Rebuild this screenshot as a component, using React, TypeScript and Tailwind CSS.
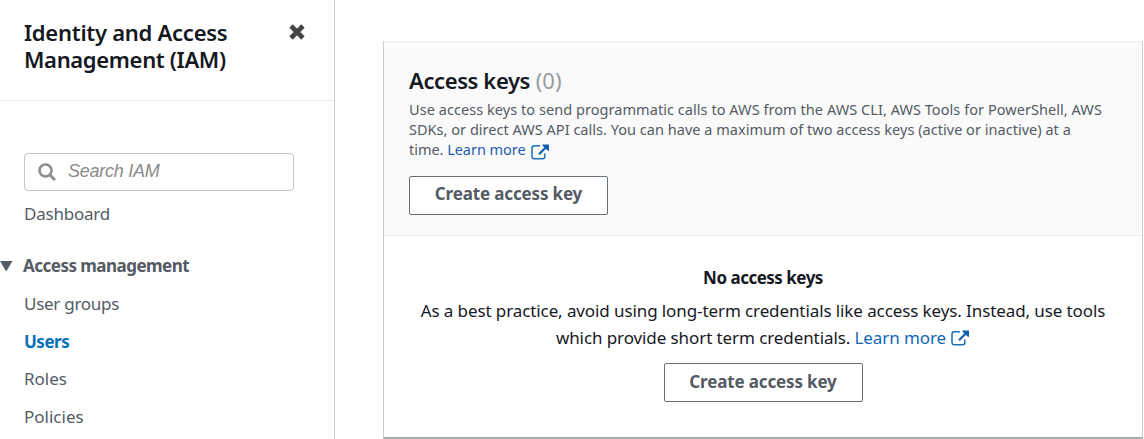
import React from "react";

function ExternalIcon({ className }: { className: string }) {
  return (
    <svg viewBox="0 0 19 16" className={className} fill="none">
      <path d="M9 1.7H3.5a2.5 2.5 0 0 0-2.5 2.5V12.5a2.3 2.3 0 0 0 2.3 2.3h8.2a2.3 2.3 0 0 0 2.3-2.3V9.5" stroke="#1a6fb8" strokeWidth="1.5" />
      <path d="M8 10.2 15.5 2.7" stroke="#0f5fae" strokeWidth="2.2" />
      <path d="M11.5.4H18v6.4h-1.2L11.5 1.6z" fill="#0f5fae" />
    </svg>
  );
}

function CreateButton({ className }: { className: string }) {
  return (
    <button className={`flex h-[39px] w-[199px] items-center justify-center rounded-[2px] border border-[#687078] bg-white text-[17px] font-bold whitespace-nowrap text-[#545b64] ${className}`}>
      <span className="tracking-[-0.15px]">Create access key</span>
    </button>
  );
}

export default function App() {
  return (
    <div className="flex h-[439px] w-[1144px] overflow-hidden bg-white font-['Noto_Sans',sans-serif] whitespace-nowrap">
      <aside className="flex w-[335px] shrink-0 flex-col border-r border-[#c9d0d1]">
        <header className="flex h-[101px] items-start justify-between border-b border-[#e6eaea] pt-[19px] pr-[29px] pl-6">
          <h1 className="text-[22px] leading-[27px] font-semibold text-[#16191f]">
            <span className="block tracking-[-0.27px]">Identity and Access</span>
            <span className="block tracking-[-0.34px]">Management (IAM)</span>
          </h1>
          <svg viewBox="0 0 16 16" className="mt-[5px] h-4 w-4" stroke="#444" strokeWidth="4.6">
            <path d="M2 2l12 12M14 2L2 14" />
          </svg>
        </header>
        <div className="mt-[52px] ml-6 flex h-[38px] w-[270px] items-center rounded-[4px] border border-[#c4c5c6] pl-[13px]">
          <svg viewBox="0 0 18 18" className="h-[18px] w-[18px]" fill="none" stroke="#8f8f8f">
            <circle cx="7.5" cy="7.5" r="6" strokeWidth="2.6" />
            <path d="m12 12 5 5" strokeWidth="3" />
          </svg>
          <span className="ml-3 pb-[1px] font-['Liberation_Sans',sans-serif] text-[18px] tracking-[-0.25px] text-[#8a8a8a] italic">Search IAM</span>
        </div>
        <nav className="text-[17px] leading-[38px] text-[#545b64]">
          <div className="mt-[4px] ml-6 h-[38px] tracking-[-0.22px]">Dashboard</div>
          <div className="mt-[14px] flex h-[38px] items-center font-bold">
            <svg viewBox="0 0 13 11" className="h-[11px] w-[13px]"><path d="M0 0h12.5L6.2 10.5z" fill="#545b64" /></svg>
            <span className="ml-[10px] tracking-[-0.52px]">Access management</span>
          </div>
          <div className="ml-6 h-[38px] tracking-[-0.27px]">User groups</div>
          <div className="ml-6 h-[37px] font-bold tracking-[-0.5px] text-[#0073bb]">Users</div>
          <div className="ml-6 h-[38px]">Roles</div>
          <div className="ml-6 h-[38px]">Policies</div>
        </nav>
      </aside>
      <main className="pt-[41px] pl-[48px]">
        <section className="h-[398px] w-[760px] border border-b-2 border-t-[#eceeee] border-r-[#c8cccc] border-b-[#a5adad] border-l-[#c8cccc]">
          <div className="h-[194px] border-b border-[#eaeded] bg-[#fafafa] pt-[22px] pl-[25px]">
            <h2 className="text-[22px] leading-[32px] font-semibold text-[#16191f]">
              <span className="tracking-[-0.4px]">Access keys</span> <span className="font-normal text-[#959da1]">(0)</span>
            </h2>
            <p className="mt-[3px] text-[14.5px] leading-[20px] text-[#545b64]">
              <span className="block tracking-[0.055px]">Use access keys to send programmatic calls to AWS from the AWS CLI, AWS Tools for PowerShell, AWS</span>
              <span className="block tracking-[0.025px]">SDKs, or direct AWS API calls. You can have a maximum of two access keys (active or inactive) at a</span>
              <span className="flex tracking-[-0.04px]"><span>time. <span className="text-[#1f5cb0]">Learn more</span></span><ExternalIcon className="mt-[5px] ml-[5px] h-[16px] w-[19px]" /></span>
            </p>
            <div className="mt-[16px]"><CreateButton className="pb-[3px]" /></div>
          </div>
          <div className="flex flex-col items-center pt-[28px] text-[17px] leading-[27px] text-[#16191f]">
            <h3 className="font-bold tracking-[-0.5px]">No access keys</h3>
            <p className="mt-[6px] flex flex-col items-center">
              <span className="tracking-[-0.1px]">As a best practice, avoid using long-term credentials like access keys. Instead, use tools</span>
              <span className="flex tracking-[-0.09px]"><span>which provide short term credentials. <span className="text-[#0f67b5]">Learn more</span></span><ExternalIcon className="mt-[6px] ml-[5px] h-[16px] w-[19px]" /></span>
            </p>
            <div className="mt-[12px] leading-normal"><CreateButton className="pb-[2px]" /></div>
          </div>
        </section>
      </main>
    </div>
  );
}
